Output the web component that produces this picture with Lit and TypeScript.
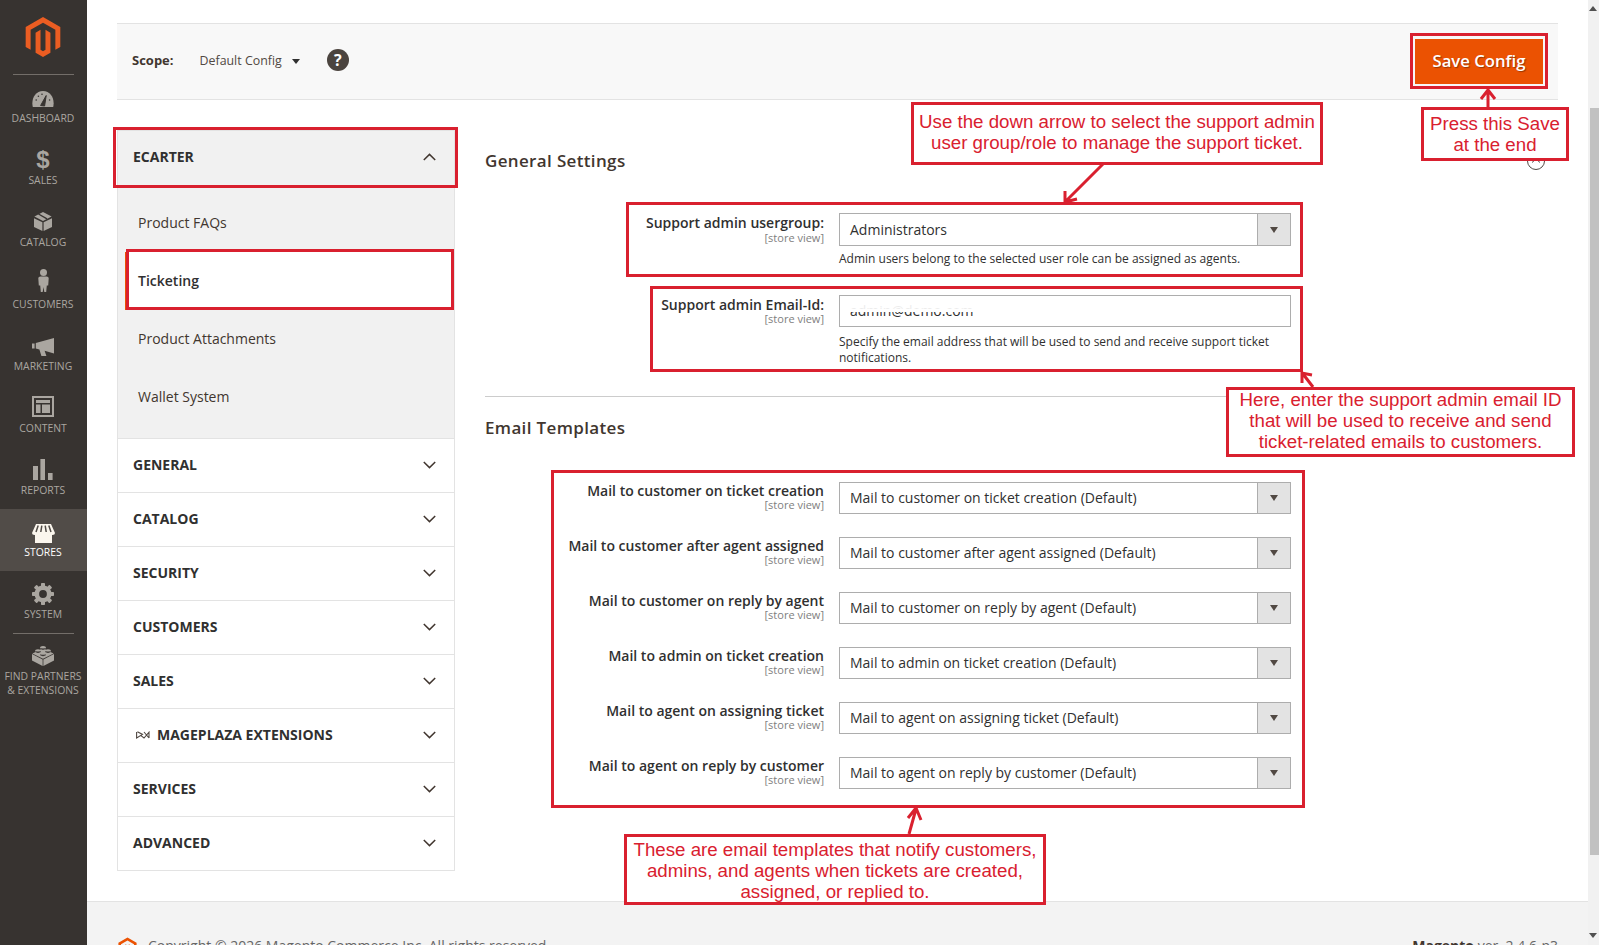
import { LitElement, html, css, svg } from "lit";
import { customElement } from "lit/decorators.js";

const LOGO = "M12 24l-4.455-2.572v-12l2.97-1.715v12.001l1.485.902 1.485-.902V7.713l2.97 1.715v12L12 24zM22.391 6v12l-2.969 1.714V7.713L12 3.43 4.574 7.713v12.001L1.609 18V6L12 0l10.391 6z";

const gearTeeth = [0, 45, 90, 135, 180, 225, 270, 315].map(
  (a) => svg`<rect x="9" y="0" width="4" height="5" rx="0.8" transform="rotate(${a} 11 11)"></rect>`
);

const ICONS: Record<string, unknown> = {
  dashboard: html`<svg class="ic" width="22" height="16" viewBox="0 0 22 16"><path d="M0.8 16C-1 8 3 0 11 0C19 0 23 8 21.2 16Z"/><path class="cut" d="M8.6 14.5L14.2 4.5L12.6 15Z"/><circle class="cutf" cx="4.2" cy="9" r=".8"/><circle class="cutf" cx="6.4" cy="5.2" r=".8"/><circle class="cutf" cx="10" cy="3.2" r=".8"/><circle class="cutf" cx="17.6" cy="9" r=".8"/></svg>`,
  catalog: html`<svg class="ic" width="18" height="19" viewBox="0 0 18 19"><path d="M0 6.2L8.4 10.2V19L0 15Z"/><path d="M9.6 10.2L18 6.2V15L9.6 19Z"/><path d="M9 0L17.6 4.4L9 9L0.4 4.4Z"/><path class="cut" d="M4.5 2L13 6.8" stroke-width="1.4"/></svg>`,
  customers: html`<svg class="ic" width="11" height="23" viewBox="0 0 11 23"><circle cx="5.5" cy="3.5" r="3.5"/><path d="M0.3 9.3Q0.3 7.6 2.4 7.6H8.6Q10.7 7.6 10.7 9.3L10.2 16.6H8.8L8.2 23H6.3L5.5 18L4.7 23H2.8L2.2 16.6H0.8Z"/></svg>`,
  marketing: html`<svg class="ic" width="22" height="18" viewBox="0 0 22 18"><path d="M0 5.5H2.6V10.5H0Z"/><path d="M3.8 5L22 0V15.5L12.6 12.8L14.4 18H9.4L7.4 11.4L3.8 10.4Z"/></svg>`,
  content: html`<svg class="ic" width="22" height="21" viewBox="0 0 22 21"><path d="M0 0H22V21H0ZM2 2V19H20V2Z" fill-rule="evenodd"/><path d="M4 4H18V7H4ZM4 8.5H8.5V17H4ZM10 8.5H18V17H10Z"/></svg>`,
  reports: html`<svg class="ic" width="20" height="21" viewBox="0 0 20 21"><path d="M0 7H5V21H0ZM7.4 0H12V21H7.4ZM15 14H19.6V21H15Z"/></svg>`,
  stores: html`<svg class="ic" width="23" height="19" viewBox="0 0 23 19"><path d="M3 9H20V19H3Z"/><path d="M4 0H19L23 9Q23 11 20.5 11Q18 11 17.3 9.2Q16.2 11 14.4 11Q12.6 11 11.5 9.2Q10.4 11 8.6 11Q6.8 11 5.7 9.2Q5 11 2.5 11Q0 11 0 9Z"/><path class="cut-store" d="M6.2 1.6L4 8M9.8 1.6L8.8 8M13.2 1.6L14.2 8M16.8 1.6L19 8"/></svg>`,
  system: html`<svg class="ic" width="22" height="22" viewBox="0 0 22 22">${gearTeeth}<circle cx="11" cy="11" r="6.2" fill="none" stroke="#aaa6a0" stroke-width="4.6"/></svg>`,
  partners: html`<svg class="ic" width="22" height="21" viewBox="0 0 22 21"><path d="M0 9L10.6 14.4V21L0 15.6Z"/><path d="M11.4 14.4L22 9V15.6L11.4 21Z"/><path d="M11 3.4L21.6 8.6L11 13.8L0.4 8.6Z"/><ellipse cx="11" cy="3" rx="3" ry="2"/><ellipse cx="6" cy="6.2" rx="3" ry="2"/><ellipse cx="16" cy="6.2" rx="3" ry="2"/><ellipse cx="11" cy="9.4" rx="3" ry="2"/><path class="cut" stroke-width=".6" d="M8 3.4Q11 5.6 14 3.4M3 6.6Q6 8.8 9 6.6M13 6.6Q16 8.8 19 6.6M8 9.8Q11 12 14 9.8"/></svg>`,
};

const NAV = [
  ["dashboard", "DASHBOARD"],
  ["sales", "SALES"],
  ["catalog", "CATALOG"],
  ["customers", "CUSTOMERS"],
  ["marketing", "MARKETING"],
  ["content", "CONTENT"],
  ["reports", "REPORTS"],
  ["stores", "STORES"],
  ["system", "SYSTEM"],
];

const TEMPLATES = [
  "Mail to customer on ticket creation",
  "Mail to customer after agent assigned",
  "Mail to customer on reply by agent",
  "Mail to admin on ticket creation",
  "Mail to agent on assigning ticket",
  "Mail to agent on reply by customer",
];

const chevronDown = html`<svg class="chev" width="13" height="8" viewBox="0 0 13 8"><path d="M.8 1L6.5 6.6L12.2 1"/></svg>`;
const chevronUp = html`<svg class="chev" width="13" height="8" viewBox="0 0 13 8"><path d="M.8 7L6.5 1.4L12.2 7"/></svg>`;

@customElement("app-root")
export class AppRoot extends LitElement {
  static styles = css`
    :host { display: block; position: relative; width: 1599px; height: 945px; overflow: hidden; background: #fff; font-family: "Open Sans", "DejaVu Sans", sans-serif; color: #303030; }
    * { box-sizing: border-box; }
    .root { display: flex; height: 945px; }

    .nav { width: 87px; flex: none; background: #373330; display: flex; flex-direction: column; align-items: stretch; }
    .logo { height: 74px; padding: 17px 1px 0 0; display: flex; justify-content: center; }
    .logo svg { display: block; }
    .rule { height: 1px; margin: 0 13px; background: #736e69; }
    .nav-item { height: 62px; padding: 9px 1px 0 0; display: flex; flex-direction: column; align-items: center; color: #aaa6a0; font-size: 10.4px; line-height: 14px; text-align: center; white-space: nowrap; }
    .iconbox { height: 27px; flex: none; display: flex; align-items: center; justify-content: center; }
    .iconbox.i-dashboard, .iconbox.i-marketing { padding-top: 2px; }
    .iconbox.i-customers { padding-bottom: 6px; }
    .iconbox.i-content { padding-bottom: 2px; }
    .iconbox.i-stores { padding-top: 4px; }
    .nav-item.active { background: #514c48; color: #fff; }
    .nav-item.partners { height: 70px; padding-top: 8px; }
    .ic { display: block; fill: #aaa6a0; }
    .active .ic { fill: #fbf6ee; }
    .ic .cut { fill: #373330; stroke: #373330; }
    .ic .cutf { fill: #373330; }
    .ic .cut-store { fill: none; stroke: #514c48; stroke-width: 1.5; }
    .dollar { font-family: "Liberation Sans", sans-serif; font-weight: 700; font-size: 24px; line-height: 27px; color: #aaa6a0; }

    .page { flex: 1; min-width: 0; display: flex; flex-direction: column; height: 945px; }
    .wrap { padding: 23px 30px 0; height: 901px; }

    .toolbar { height: 77px; background: #f8f8f8; border-top: 1px solid #e3e3e3; border-bottom: 1px solid #e3e3e3; display: flex; align-items: center; padding: 0 15px 4px; font-size: 13px; color: #41362f; }
    .toolbar b { font-weight: 700; }
    .scope-val { margin: 2px 0 0 26px; color: #514943; font-size: 12.4px; }
    .tri { width: 0; height: 0; border-left: 4px solid transparent; border-right: 4px solid transparent; border-top: 5px solid #303030; margin: 4px 0 0 10px; }
    .help { width: 22px; height: 22px; border-radius: 50%; background: #4b443f; color: #fff; font-weight: 700; font-size: 16px; line-height: 22px; text-align: center; margin-left: 27px; }
    .save { margin: 0 0 -4px auto; width: 128px; height: 45px; padding-bottom: 2px; background: #eb5202; color: #fff; font-size: 16.7px; font-weight: 600; display: flex; align-items: center; justify-content: center; text-shadow: 1px 1px 1px rgba(0,0,0,.35); }

    .columns { display: flex; gap: 30px; margin-top: 30px; }
    .panel { width: 338px; flex: none; border: 1px solid #e3e3e3; border-top: none; align-self: flex-start; }
    .sec { height: 54px; border-top: 1px solid #e3e3e3; display: flex; align-items: center; justify-content: space-between; padding: 0 18px 2px 15px; font-size: 14px; font-weight: 700; color: #303030; }
    .sec.open { height: 56px; padding-bottom: 4px; background: #f1f1f1; }
    .sec .lead { display: flex; align-items: center; }
    .mp { margin: 0 7px 0 3px; fill: none; stroke: #514943; stroke-width: 1.1; }
    .chev { fill: none; stroke: #41362f; stroke-width: 1.5; display: block; }
    .sub { background: #f1f1f1; padding: 8px 0 12px; font-size: 14px; color: #41362f; }
    .sub div { height: 58px; line-height: 58px; padding-left: 20px; }
    .sub .on { margin-left: 7px; padding-left: 10px; border-left: 3px solid #eb5202; background: #fff; font-weight: 600; color: #303030; }

    .content { flex: 1; min-width: 0; }
    h2 { margin: 0; font-size: 17px; font-weight: 600; line-height: 26px; height: 26px; color: #41362f; letter-spacing: .35px; display: flex; justify-content: space-between; }
    h2.first { margin-top: 18px; }
    .collapse { margin: 4px 13px 0 0; display: block; fill: none; stroke: #514943; stroke-width: 1; }
    .field { display: grid; grid-template-columns: 339px 452px; column-gap: 15px; }
    .label { text-align: right; }
    .label b { display: block; font-size: 14px; font-weight: 600; line-height: 19px; color: #303030; white-space: nowrap; }
    .label span { display: block; font-size: 11px; line-height: 14px; color: #808080; margin-top: -2px; }
    .select { position: relative; height: 32px; border: 1px solid #adadad; background: #fff; font-size: 14px; line-height: 30px; padding-left: 10px; color: #303030; white-space: nowrap; overflow: hidden; }
    .select i { position: absolute; top: 0; right: 0; bottom: 0; width: 33px; background: #e3e3e3; border-left: 1px solid #adadad; display: flex; align-items: center; justify-content: center; }
    .select i::after { content: ""; border-left: 4px solid transparent; border-right: 4px solid transparent; border-top: 6px solid #514943; }
    .hint { font-size: 12px; line-height: 16px; color: #303030; }
    .scribble { position: absolute; left: 0; right: 0; top: 6px; height: 10px; background: linear-gradient(#ffffffe8 0 70%, #fff 70%); }

    .r1 { margin-top: 39px; }
    .r1 .select { height: 33px; line-height: 31px; }
    .r1 .label span { margin-top: -1px; }
    .r1 .hint { margin-top: 5px; }
    .r2 { margin-top: 28px; }
    .r2 .hint { margin-top: 7px; }
    .divider { height: 1px; background: #cccccc; margin-top: 30px; }
    h2.second { margin-top: 18px; }
    .tpl { margin-top: 41px; display: flex; flex-direction: column; gap: 23px; }
    .tpl .label { margin-top: -1px; }

    .footer { flex: 1; background: #f3f3f3; border-top: 1px solid #e3e3e3; padding: 34px 30px 0; display: flex; justify-content: space-between; font-size: 14px; line-height: 19px; color: #666; overflow: hidden; white-space: nowrap; }
    .footer .l { display: flex; gap: 10px; }
    .footer b { color: #41362f; font-weight: 700; }
    .footer svg { fill: #eb5202; display: block; flex: none; }

    .sb { width: 11px; flex: none; background: #f1f1f1; display: flex; flex-direction: column; height: 945px; align-items: flex-end; }
    .sb .up { width: 0; height: 0; margin: 6px 2px 0 0; border-left: 4px solid transparent; border-right: 4px solid transparent; border-bottom: 5px solid #505050; }
    .sb .thumb { width: 9px; height: 747px; background: #c1c1c1; margin-top: 97px; }
    .sb .down { width: 0; height: 0; margin: 78px 2px 0 0; border-left: 4px solid transparent; border-right: 4px solid transparent; border-top: 5px solid #505050; }

    .box { position: absolute; border: 3px solid #d9202f; pointer-events: none; }
    .note { position: absolute; border: 3px solid #d9202f; background: #fff; color: #d9202f; font-family: "Liberation Sans", Arial, sans-serif; font-size: 18.7px; line-height: 21px; text-align: center; display: flex; align-items: center; justify-content: center; white-space: nowrap; }
    .b1 { left: 113px; top: 127px; width: 345px; height: 61px; }
    .b2 { left: 126px; top: 249px; width: 328px; height: 61px; }
    .b3 { left: 1410px; top: 33px; width: 138px; height: 56px; }
    .b4 { left: 626px; top: 202px; width: 677px; height: 75px; }
    .b5 { left: 650px; top: 286px; width: 653px; height: 86px; }
    .b6 { left: 551px; top: 470px; width: 754px; height: 338px; }
    .n1 { left: 911px; top: 102px; width: 412px; height: 63px; padding-bottom: 4px; }
    .n2 { left: 1421px; top: 107px; width: 148px; height: 54px; padding-bottom: 1px; }
    .n3 { left: 1226px; top: 387px; width: 349px; height: 70px; padding-bottom: 4px; }
    .n4 { left: 624px; top: 834px; width: 422px; height: 71px; padding-top: 1px; }
    .arrows { position: absolute; left: 0; top: 0; pointer-events: none; fill: none; stroke: #d9202f; stroke-width: 3; }
  `;

  private renderTemplate(name: string) {
    return html`<div class="field">
      <div class="label"><b>${name}</b><span>[store view]</span></div>
      <div class="select">${name} (Default)<i></i></div>
    </div>`;
  }

  render() {
    return html`
      <div class="root">
        <nav class="nav">
          <div class="logo"><svg width="40" height="40" viewBox="0 0 24 24" fill="#eb5d22"><path d="${LOGO}"/></svg></div>
          <div class="rule"></div>
          ${NAV.map(([key, label]) => html`
            <div class="nav-item ${key === "stores" ? "active" : ""}">
              <div class="iconbox i-${key}">${key === "sales" ? html`<span class="dollar">$</span>` : ICONS[key]}</div>
              ${label}
            </div>`)}
          <div class="rule"></div>
          <div class="nav-item partners"><div class="iconbox">${ICONS.partners}</div>FIND PARTNERS<br />&amp; EXTENSIONS</div>
        </nav>

        <div class="page">
          <div class="wrap">
            <div class="toolbar">
              <b>Scope:</b><span class="scope-val">Default Config</span><span class="tri"></span>
              <span class="help">?</span>
              <span class="save">Save Config</span>
            </div>
            <div class="columns">
              <aside class="panel">
                <div class="sec open"><span>ECARTER</span>${chevronUp}</div>
                <div class="sub">
                  <div>Product FAQs</div>
                  <div class="on">Ticketing</div>
                  <div>Product Attachments</div>
                  <div>Wallet System</div>
                </div>
                ${["GENERAL", "CATALOG", "SECURITY", "CUSTOMERS", "SALES"].map((s) => html`<div class="sec"><span>${s}</span>${chevronDown}</div>`)}
                <div class="sec"><span class="lead"><svg class="mp" width="14" height="8" viewBox="0 0 14 8"><path d="M.6 1V7L6.5 3.4L1.4 .8M5 4.6L8 7L13 1.2V7M8 1L13 7"/></svg>MAGEPLAZA EXTENSIONS</span>${chevronDown}</div>
                ${["SERVICES", "ADVANCED"].map((s) => html`<div class="sec"><span>${s}</span>${chevronDown}</div>`)}
              </aside>
              <section class="content">
                <h2 class="first">General Settings<svg class="collapse" width="18" height="18" viewBox="0 0 18 18"><circle cx="9" cy="9" r="8.5"/><path d="M5 10.5L9 7L13 10.5"/></svg></h2>
                <div class="field r1">
                  <div class="label"><b>Support admin usergroup:</b><span>[store view]</span></div>
                  <div>
                    <div class="select">Administrators<i></i></div>
                    <div class="hint">Admin users belong to the selected user role can be assigned as agents.</div>
                  </div>
                </div>
                <div class="field r2">
                  <div class="label"><b>Support admin Email-Id:</b><span>[store view]</span></div>
                  <div>
                    <div class="select">admin@demo.com<span class="scribble"></span></div>
                    <div class="hint">Specify the email address that will be used to send and receive support ticket notifications.</div>
                  </div>
                </div>
                <div class="divider"></div>
                <h2 class="second">Email Templates</h2>
                <div class="tpl">${TEMPLATES.map((t) => this.renderTemplate(t))}</div>
              </section>
            </div>
          </div>
          <footer class="footer">
            <div class="l"><svg width="21" height="24" viewBox="0 0 24 24"><path d="${LOGO}"/></svg><span>Copyright © 2026 Magento Commerce Inc. All rights reserved.</span></div>
            <div><b>Magento</b> ver. 2.4.6-p3</div>
          </footer>
        </div>

        <div class="sb"><div class="up"></div><div class="thumb"></div><div class="down"></div></div>
      </div>

      <div class="box b1"></div>
      <div class="box b2"></div>
      <div class="box b3"></div>
      <div class="box b4"></div>
      <div class="box b5"></div>
      <div class="box b6"></div>
      <svg class="arrows" width="1599" height="945" viewBox="0 0 1599 945">
        <path d="M1103 164L1066 201M1065 191L1065 202L1077 199"/>
        <path d="M1488 107V91M1481 99L1488 90L1495 99"/>
        <path d="M1313 387L1303 374M1302 383L1302 373L1312 375"/>
        <path d="M909 834L916 809M908 818L916 808L921 820"/>
      </svg>
      <div class="note n1"><div>Use the down arrow to select the support admin<br />user group/role to manage the support ticket.</div></div>
      <div class="note n2"><div>Press this Save<br />at the end</div></div>
      <div class="note n3"><div>Here, enter the support admin email ID<br />that will be used to receive and send<br />ticket-related emails to customers.</div></div>
      <div class="note n4"><div>These are email templates that notify customers,<br />admins, and agents when tickets are created,<br />assigned, or replied to.</div></div>
    `;
  }
}
